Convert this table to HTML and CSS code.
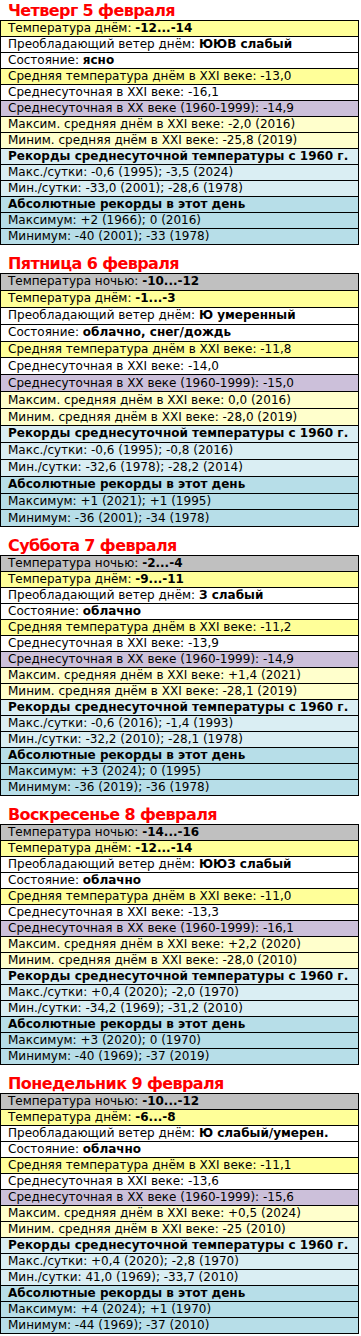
FILE: index.html
```html
<!DOCTYPE html>
<html lang="ru">
<head>
<meta charset="utf-8">
<title>Прогноз</title>
<link rel="stylesheet" href="styles.css">
</head>
<body>
<div class="day">
  <div class="title">Четверг 5 февраля</div>
  <table class="grid">
    <tr class="r-day"><td>Температура днём: <b>-12...-14</b></td></tr>
    <tr class="r-white"><td>Преобладающий ветер днём: <b>ЮЮВ слабый</b></td></tr>
    <tr class="r-white"><td>Состояние: <b>ясно</b></td></tr>
    <tr class="r-day"><td>Средняя температура днём в XXI веке: -13,0</td></tr>
    <tr class="r-white"><td>Среднесуточная в XXI веке: -16,1</td></tr>
    <tr class="r-lav"><td>Среднесуточная в XX веке (1960-1999): -14,9</td></tr>
    <tr class="r-cream"><td>Максим. средняя днём в XXI веке: -2,0 (2016)</td></tr>
    <tr class="r-cream"><td>Миним. средняя днём в XXI веке: -25,8 (2019)</td></tr>
    <tr class="r-sky"><td><b>Рекорды среднесуточной температуры с 1960 г.</b></td></tr>
    <tr class="r-sky"><td>Макс./сутки: -0,6 (1995); -3,5 (2024)</td></tr>
    <tr class="r-sky"><td>Мин./сутки: -33,0 (2001); -28,6 (1978)</td></tr>
    <tr class="r-blue"><td><b>Абсолютные рекорды в этот день</b></td></tr>
    <tr class="r-blue"><td>Максимум: +2 (1966); 0 (2016)</td></tr>
    <tr class="r-blue"><td>Минимум: -40 (2001); -33 (1978)</td></tr>
  </table>
</div>

<div class="day">
  <div class="title">Пятница 6 февраля</div>
  <table class="grid grid--tall">
    <tr class="r-night"><td>Температура ночью: <b>-10...-12</b></td></tr>
    <tr class="r-day"><td>Температура днём: <b>-1...-3</b></td></tr>
    <tr class="r-white"><td>Преобладающий ветер днём: <b>Ю умеренный</b></td></tr>
    <tr class="r-white"><td>Состояние: <b>облачно, снег/дождь</b></td></tr>
    <tr class="r-day"><td>Средняя температура днём в XXI веке: -11,8</td></tr>
    <tr class="r-white"><td>Среднесуточная в XXI веке: -14,0</td></tr>
    <tr class="r-lav"><td>Среднесуточная в XX веке (1960-1999): -15,0</td></tr>
    <tr class="r-cream"><td>Максим. средняя днём в XXI веке: 0,0 (2016)</td></tr>
    <tr class="r-cream"><td>Миним. средняя днём в XXI веке: -28,0 (2019)</td></tr>
    <tr class="r-sky"><td><b>Рекорды среднесуточной температуры с 1960 г.</b></td></tr>
    <tr class="r-sky"><td>Макс./сутки: -0,6 (1995); -0,8 (2016)</td></tr>
    <tr class="r-sky"><td>Мин./сутки: -32,6 (1978); -28,2 (2014)</td></tr>
    <tr class="r-blue"><td><b>Абсолютные рекорды в этот день</b></td></tr>
    <tr class="r-blue"><td>Максимум: +1 (2021); +1 (1995)</td></tr>
    <tr class="r-blue"><td>Минимум: -36 (2001); -34 (1978)</td></tr>
  </table>
</div>

<div class="day">
  <div class="title">Суббота 7 февраля</div>
  <table class="grid">
    <tr class="r-night"><td>Температура ночью: <b>-2...-4</b></td></tr>
    <tr class="r-day"><td>Температура днём: <b>-9...-11</b></td></tr>
    <tr class="r-white"><td>Преобладающий ветер днём: <b>З слабый</b></td></tr>
    <tr class="r-white"><td>Состояние: <b>облачно</b></td></tr>
    <tr class="r-day"><td>Средняя температура днём в XXI веке: -11,2</td></tr>
    <tr class="r-white"><td>Среднесуточная в XXI веке: -13,9</td></tr>
    <tr class="r-lav"><td>Среднесуточная в XX веке (1960-1999): -14,9</td></tr>
    <tr class="r-cream"><td>Максим. средняя днём в XXI веке: +1,4 (2021)</td></tr>
    <tr class="r-cream"><td>Миним. средняя днём в XXI веке: -28,1 (2019)</td></tr>
    <tr class="r-sky"><td><b>Рекорды среднесуточной температуры с 1960 г.</b></td></tr>
    <tr class="r-sky"><td>Макс./сутки: -0,6 (2016); -1,4 (1993)</td></tr>
    <tr class="r-sky"><td>Мин./сутки: -32,2 (2010); -28,1 (1978)</td></tr>
    <tr class="r-blue"><td><b>Абсолютные рекорды в этот день</b></td></tr>
    <tr class="r-blue"><td>Максимум: +3 (2024); 0 (1995)</td></tr>
    <tr class="r-blue"><td>Минимум: -36 (2019); -36 (1978)</td></tr>
  </table>
</div>

<div class="day">
  <div class="title">Воскресенье 8 февраля</div>
  <table class="grid">
    <tr class="r-night"><td>Температура ночью: <b>-14...-16</b></td></tr>
    <tr class="r-day"><td>Температура днём: <b>-12...-14</b></td></tr>
    <tr class="r-white"><td>Преобладающий ветер днём: <b>ЮЮЗ слабый</b></td></tr>
    <tr class="r-white"><td>Состояние: <b>облачно</b></td></tr>
    <tr class="r-day"><td>Средняя температура днём в XXI веке: -11,0</td></tr>
    <tr class="r-white"><td>Среднесуточная в XXI веке: -13,3</td></tr>
    <tr class="r-lav"><td>Среднесуточная в XX веке (1960-1999): -16,1</td></tr>
    <tr class="r-cream"><td>Максим. средняя днём в XXI веке: +2,2 (2020)</td></tr>
    <tr class="r-cream"><td>Миним. средняя днём в XXI веке: -28,0 (2010)</td></tr>
    <tr class="r-sky"><td><b>Рекорды среднесуточной температуры с 1960 г.</b></td></tr>
    <tr class="r-sky"><td>Макс./сутки: +0,4 (2020); -2,0 (1970)</td></tr>
    <tr class="r-sky"><td>Мин./сутки: -34,2 (1969); -31,2 (2010)</td></tr>
    <tr class="r-blue"><td><b>Абсолютные рекорды в этот день</b></td></tr>
    <tr class="r-blue"><td>Максимум: +3 (2020); 0 (1970)</td></tr>
    <tr class="r-blue"><td>Минимум: -40 (1969); -37 (2019)</td></tr>
  </table>
</div>

<div class="day">
  <div class="title">Понедельник 9 февраля</div>
  <table class="grid">
    <tr class="r-night"><td>Температура ночью: <b>-10...-12</b></td></tr>
    <tr class="r-day"><td>Температура днём: <b>-6...-8</b></td></tr>
    <tr class="r-white"><td>Преобладающий ветер днём: <b>Ю слабый/умерен.</b></td></tr>
    <tr class="r-white"><td>Состояние: <b>облачно</b></td></tr>
    <tr class="r-day"><td>Средняя температура днём в XXI веке: -11,1</td></tr>
    <tr class="r-white"><td>Среднесуточная в XXI веке: -13,6</td></tr>
    <tr class="r-lav"><td>Среднесуточная в XX веке (1960-1999): -15,6</td></tr>
    <tr class="r-cream"><td>Максим. средняя днём в XXI веке: +0,5 (2024)</td></tr>
    <tr class="r-cream"><td>Миним. средняя днём в XXI веке: -25 (2010)</td></tr>
    <tr class="r-sky"><td><b>Рекорды среднесуточной температуры с 1960 г.</b></td></tr>
    <tr class="r-sky"><td>Макс./сутки: +0,4 (2020); -2,8 (1970)</td></tr>
    <tr class="r-sky"><td>Мин./сутки: 41,0 (1969); -33,7 (2010)</td></tr>
    <tr class="r-blue"><td><b>Абсолютные рекорды в этот день</b></td></tr>
    <tr class="r-blue"><td>Максимум: +4 (2024); +1 (1970)</td></tr>
    <tr class="r-blue"><td>Минимум: -44 (1969); -37 (2010)</td></tr>
  </table>
</div>
</body>
</html>
```

FILE: styles.css
```css
html, body {
  margin: 0;
  padding: 0;
  background: #ffffff;
}

body {
  font-family: "DejaVu Sans", Verdana, sans-serif;
  font-size: 12px;
  color: #000000;
}

.day {
  margin-bottom: 8px;
}

.title {
  box-sizing: border-box;
  height: 20px;
  padding: 2px 0 0 8px;
  line-height: 18px;
  font-size: 16px;
  font-weight: bold;
  letter-spacing: -0.6px;
  color: #ff0000;
}

.grid {
  width: 359px;
  border-collapse: collapse;
}

.grid td {
  border: 1px solid #000000;
  height: 15px;
  line-height: 15px;
  padding: 0 7px;
  white-space: nowrap;
}

.grid--tall td {
  height: 15.9px;
}

.r-night td { background: #c0c0c0; }
.r-day td { background: #ffff99; }
.r-white td { background: #ffffff; }
.r-lav td { background: #ccc0da; }
.r-cream td { background: #ffffcc; }
.r-sky td { background: #daeef3; }
.r-blue td { background: #b7dee8; }
```
